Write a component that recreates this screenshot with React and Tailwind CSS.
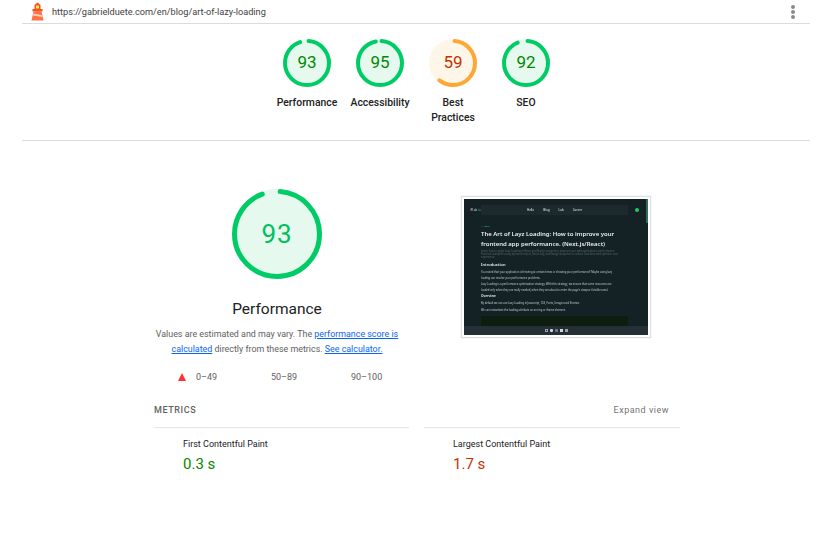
import React from 'react';

const GREEN = '#00cc66';
const ORANGE = '#ffa733';

const Gauge = ({ score, size, stroke, color, fill, textClass }) => {
  const r = (size - stroke) / 2;
  const c = 2 * Math.PI * r;
  const dash = (score / 100) * c;
  return (
    <div className="relative shrink-0 rounded-full" style={{ width: size, height: size, backgroundColor: fill }}>
      <svg width={size} height={size} className="absolute top-0 left-0 -rotate-90">
        <circle
          cx={size / 2}
          cy={size / 2}
          r={r}
          fill="none"
          stroke={color}
          strokeWidth={stroke}
          strokeLinecap="round"
          strokeDasharray={`${dash} ${c}`}
          strokeDashoffset={-c * 0.012}
        />
      </svg>
      <div className={`absolute inset-0 flex items-center justify-center ${textClass}`}>{score}</div>
    </div>
  );
};

const categories = [
  { score: 93, label: 'Performance', color: GREEN, fill: '#e6f9ef', text: 'text-[#008800]' },
  { score: 95, label: 'Accessibility', color: GREEN, fill: '#e6f9ef', text: 'text-[#008800]' },
  { score: 59, label: 'Best Practices', color: ORANGE, fill: '#fff6ea', text: 'text-[#c33300]' },
  { score: 92, label: 'SEO', color: GREEN, fill: '#e6f9ef', text: 'text-[#008800]' },
];

const Thumbnail = () => (
  <div className="w-[190px] h-[142px] bg-white border border-[#e0e0e0] p-[2px] shadow-[0_0_1px_rgba(0,0,0,0.2)]">
    <div className="relative w-full h-full bg-[#152225] overflow-hidden text-white flex flex-col font-['Noto_Sans',sans-serif] blur-[0.4px]">
      <div className="flex items-center pl-[6px] pr-[9px] pt-[6px] shrink-0">
        <span className="text-[2.8px] w-[11px] text-gray-300 whitespace-nowrap">iPLab <span className="text-[#22c55e]">Lab</span></span>
        <div className="flex-1 h-[10px] bg-[#1d2a2d] flex items-center justify-center gap-[9px] text-[3px] text-gray-200">
          <span>Hello</span><span>Blog</span><span>Lab</span><span>Career</span>
        </div>
        <div className="ml-[7px] w-[4px] h-[4px] rounded-full bg-[#22c55e]"></div>
      </div>
      <div className="flex-1 pl-[17px] pr-[20px] pt-[10px] overflow-hidden">
        <div className="text-[2.5px] leading-[3px] text-[#22c55e]">← Back</div>
        <div className="mt-[1px] text-[6px] leading-[10px] font-semibold text-[#e8eeee] whitespace-nowrap">
          The Art of Layz Loading: How to improve your<br />frontend app performance. (Next.js/React)
        </div>
        <div className="mt-[1px] text-[2.6px] leading-[3px] text-[#56666a] whitespace-nowrap">
          Learn how to apply Lazy Loading in React and Next.js projects to improve your web application's performance.<br />
          Practical examples using dynamic import, React.lazy, and Image Suspense to reduce load time and optimize user<br />
          experience.
        </div>
        <div className="mt-[3px] text-[4px] leading-[6px] font-semibold text-[#e8eeee]">Introduction</div>
        <div className="mt-[2px] text-[2.6px] leading-[5.5px] text-[#c4cccc] whitespace-nowrap">
          You noted that your application is freezing at certain times or showing poor performance? Maybe using lazy<br />
          loading can resolve your performance problems.
        </div>
        <div className="mt-[1px] text-[2.6px] leading-[5.5px] text-[#c4cccc] whitespace-nowrap">
          Lazy Loading is a performance optimization strategy. With this strategy, we ensure that some resources are<br />
          loaded only when they are really needed, when they are about to enter the page's viewport (visible area).
        </div>
        <div className="text-[3.2px] leading-[6px] font-semibold text-[#e8eeee]">Overview</div>
        <div className="mt-[1px] text-[2.6px] leading-[6px] text-[#c4cccc] whitespace-nowrap">By default we can use Lazy Loading in Javascript, CSS, Fonts, Images and Iframes.</div>
        <div className="mt-[1px] text-[2.6px] leading-[6px] text-[#c4cccc] whitespace-nowrap">We can instantiate the loading attribute on an img or iframe element.</div>
        <div className="mt-[3px] h-[10px] bg-[#0f1c10]"></div>
      </div>
      <div className="h-[9px] bg-[#243035] flex items-center justify-center gap-[2px] shrink-0">
        <div className="w-[3px] h-[3px] border-[0.5px] border-gray-400"></div>
        <div className="w-[3px] h-[3px] rounded-[1px] bg-gray-300"></div>
        <div className="w-[3px] h-[3px] bg-gray-500"></div>
        <div className="w-[3px] h-[3px] bg-gray-300"></div>
        <div className="w-[3px] h-[3px] bg-gray-400"></div>
      </div>
      <div className="absolute right-0 top-0 w-[2px] h-[24px] bg-[#2e6b62]"></div>
    </div>
  </div>
);

const App = () => {
  return (
    <div className="w-[832px] h-[540px] bg-white overflow-hidden font-['Roboto','Noto_Sans',sans-serif] text-[#212121]">
      <div className="mx-[22px] h-[24px] border-b border-[#dcdcdc] flex items-center pl-[8px] pr-[15px]">
        <svg width="15" height="19" viewBox="0 0 15 19" className="shrink-0 mb-[1px]">
          <path d="M4.5 3 L7.5 0.5 L10.5 3 L10.5 7 L4.5 7 Z" fill="#f4511e" />
          <rect x="6" y="3.5" width="3" height="3" fill="#ffeb3b" />
          <rect x="2.5" y="7" width="10" height="2.5" fill="#f4511e" />
          <path d="M3.5 9.5 L11.5 9.5 L13.5 18.5 L1.5 18.5 Z" fill="#ff7043" />
          <path d="M3.2 11.5 L11.8 13 L12.2 15 L2.8 13.5 Z" fill="#ffccbc" />
        </svg>
        <span className="ml-[7px] text-[9.2px] text-[#424242] leading-none flex-1">https://gabrielduete.com/en/blog/art-of-lazy-loading</span>
        <div className="flex flex-col gap-[1px]">
          <div className="w-[4px] h-[4px] rounded-full bg-[#8a8a8a]"></div>
          <div className="w-[4px] h-[4px] rounded-full bg-[#8a8a8a]"></div>
          <div className="w-[4px] h-[4px] rounded-full bg-[#8a8a8a]"></div>
        </div>
      </div>

      <div className="mx-[22px] h-[117px] border-b border-[#dcdcdc] flex justify-center pt-[15px] pl-[1px]">
        {categories.map((cat) => (
          <div key={cat.label} className="w-[73px] flex flex-col items-center">
            <Gauge score={cat.score} size={48} stroke={4} color={cat.color} fill={cat.fill} textClass={`text-[17px] ${cat.text}`} />
            <div className="mt-[8px] w-[64px] flex justify-center text-center text-[10.4px] leading-[15px] font-medium whitespace-normal">
              <span className={cat.label === 'Best Practices' ? 'w-[50px]' : 'whitespace-nowrap'}>{cat.label}</span>
            </div>
          </div>
        ))}
      </div>

      <div className="w-[526px] ml-[154px] mt-[48px]">
        <div className="flex">
          <div className="w-[246px] flex flex-col items-center">
            <Gauge score={93} size={90} stroke={5} color={GREEN} fill="#e6f9ef" textClass="text-[26px] text-[#00c060] font-normal tracking-[1px]" />
            <div className="mt-[18px] text-[15.5px] leading-[24px]">Performance</div>
            <p className="mt-[6px] text-center text-[8.9px] leading-[15px] text-[#616161] whitespace-nowrap">
              Values are estimated and may vary. The <a className="text-[#0a66f0] underline">performance score is</a>
              <br />
              <a className="text-[#0a66f0] underline">calculated</a> directly from these metrics. <a className="text-[#0a66f0] underline">See calculator.</a>
            </p>
            <div className="mt-[13px] w-full flex text-[9px] leading-[15px] text-[#616161]">
              <div className="w-[117px] pl-[24px] flex items-center">
                <svg width="8" height="8" viewBox="0 0 8 8" className="mb-[2px]"><polygon points="4,0 8,8 0,8" fill="#ff3333" /></svg>
                <span className="ml-[10px]">0–49</span>
              </div>
              <div className="w-[80px]">50–89</div>
              <div className="flex-1">90–100</div>
            </div>
          </div>
          <div className="ml-[61px] mt-[7px]">
            <Thumbnail />
          </div>
        </div>

        <div className="mt-[19px] flex items-center justify-between h-[14px]">
          <span className="text-[9px] font-medium tracking-[0.6px] text-[#616161]">METRICS</span>
          <span className="text-[9px] tracking-[0.5px] text-[#757575] mr-[11px]">Expand view</span>
        </div>
        <div className="mt-[9px] flex gap-[15px]">
          <div className="w-[255px] border-t border-[#e6e6e6] pl-[29px] pt-[10px]">
            <div className="text-[9px] leading-[13px]">First Contentful Paint</div>
            <div className="mt-[3px] text-[15px] leading-[20px] text-[#008800]">0.3 s</div>
          </div>
          <div className="w-[256px] border-t border-[#e6e6e6] pl-[29px] pt-[10px]">
            <div className="text-[9px] leading-[13px]">Largest Contentful Paint</div>
            <div className="mt-[3px] text-[15px] leading-[20px] text-[#c33300]">1.7 s</div>
          </div>
        </div>
      </div>
    </div>
  );
};

export default App;
